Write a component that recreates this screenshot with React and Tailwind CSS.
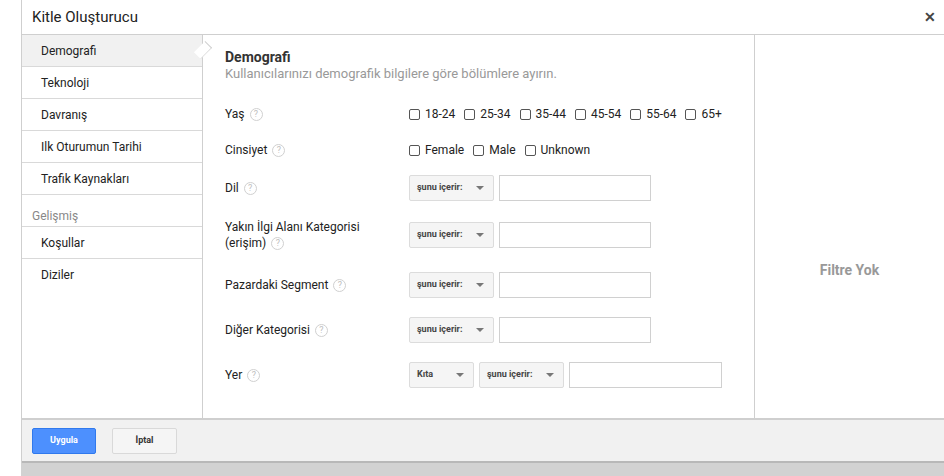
import React from 'react';

const Help = () => (
  <span className="inline-flex items-center justify-center w-[13px] h-[13px] rounded-full border border-[#d0d0d0] text-[9px] text-[#c0c0c0] ml-[5px] align-middle leading-none">?</span>
);

const Check = ({ label }) => (
  <label className="flex items-center gap-[5px] mr-[9px]">
    <span className="w-[11px] h-[11px] border border-[#555] rounded-[2px] bg-white" />
    <span>{label}</span>
  </label>
);

const Select = ({ label, w = 'w-[85px]' }) => (
  <div className={`${w} h-[26px] bg-[#f5f5f5] border border-[#dcdcdc] rounded-[2px] flex items-center justify-between px-[7px] text-[9px] font-bold text-[#444]`}>
    <span>{label}</span>
    <span className="w-0 h-0 border-l-[4px] border-r-[4px] border-t-[4px] border-l-transparent border-r-transparent border-t-[#777] mr-[2px]" />
  </div>
);

const Input = ({ w = 'w-[152px]' }) => <div className={`${w} h-[26px] border border-[#d0d0d0] bg-white`} />;

export default function App() {
  const nav = ['Demografi', 'Teknoloji', 'Davranış', 'Ilk Oturumun Tarihi', 'Trafik Kaynakları'];
  const textRows = [
    { label: 'Dil', h: 'h-[40px]' },
    { label: <>Yakın İlgi Alanı Kategorisi<br />(erişim)</>, h: 'h-[54px]' },
    { label: 'Pazardaki Segment', h: 'h-[45px]' },
    { label: 'Diğer Kategorisi', h: 'h-[45px]' },
  ];
  return (
    <div className="w-[944px] h-[476px] bg-white overflow-hidden text-[12px] text-[#222]" style={{ fontFamily: 'Roboto, "Liberation Sans", sans-serif' }}>
      <div className="ml-[21px] w-[923px] h-[463px] border-l border-[#cfcfcf] flex flex-col">
        <div className="h-[35px] border-b border-[#cfcfcf] flex items-center justify-between pl-[10px] pr-[8px] shrink-0">
          <span className="text-[15px] text-[#222]">Kitle Oluşturucu</span>
          <span className="text-[14px] font-bold text-[#444]">✕</span>
        </div>
        <div className="flex flex-1 min-h-0">
          <div className="w-[181px] border-r border-[#cfcfcf] shrink-0">
            {nav.map((n, i) => (
              <div key={n} className={`h-[32px] flex items-center pl-[19px] border-b border-[#d9d9d9] ${i === 0 ? 'bg-[#f1f1f1] relative' : ''}`}>
                {n}
                {i === 0 && (
                  <span className="absolute right-[-9px] top-[7px] w-[16px] h-[16px] bg-white border-t border-r border-[#cfcfcf] rotate-45 scale-x-[0.6]" />
                )}
              </div>
            ))}
            <div className="h-[32px] flex items-end pb-[1px] pl-[10px] text-[#888] border-b border-[#d9d9d9]">Gelişmiş</div>
            <div className="h-[32px] flex items-center pl-[19px] border-b border-[#d9d9d9]">Koşullar</div>
            <div className="h-[32px] flex items-center pl-[19px]">Diziler</div>
          </div>
          <div className="w-[552px] border-r border-[#cfcfcf] shrink-0 pl-[22px] pt-[13px]">
            <div className="text-[14px] font-bold text-[#333] leading-[18px]">Demografi</div>
            <div className="text-[13px] text-[#999] leading-[16px]">Kullanıcılarınızı demografik bilgilere göre bölümlere ayırın.</div>
            <div className="mt-[14px] flex h-[36px] items-center">
              <div className="w-[184px]">Yaş<Help /></div>
              <div className="flex">{['18-24', '25-34', '35-44', '45-54', '55-64', '65+'].map((a) => <Check key={a} label={a} />)}</div>
            </div>
            <div className="flex h-[36px] items-center">
              <div className="w-[184px]">Cinsiyet<Help /></div>
              <div className="flex">{['Female', 'Male', 'Unknown'].map((a) => <Check key={a} label={a} />)}</div>
            </div>
            {textRows.map((r, i) => (
              <div key={i} className={`flex ${r.h} items-center`}>
                <div className="w-[184px] leading-[16px]">{r.label}<Help /></div>
                <div className="flex gap-[5px]"><Select label="şunu içerir:" /><Input /></div>
              </div>
            ))}
            <div className="flex h-[46px] items-center">
              <div className="w-[184px]">Yer<Help /></div>
              <div className="flex gap-[5px]"><Select label="Kıta" w="w-[65px]" /><Select label="şunu içerir:" /><Input w="w-[153px]" /></div>
            </div>
          </div>
          <div className="flex-1 flex items-center justify-center pt-[88px]">
            <span className="text-[14px] font-bold text-[#999]">Filtre Yok</span>
          </div>
        </div>
        <div className="h-[45px] bg-[#f1f1f1] border-t-2 border-[#cfcfcf] border-b-2 border-b-[#b8b8b8] flex items-center pl-[10px] gap-[16px] shrink-0">
          <div className="w-[64px] h-[26px] bg-[#4d90fe] border border-[#3079ed] rounded-[2px] text-white text-[9px] font-bold flex items-center justify-center">Uygula</div>
          <div className="w-[65px] h-[26px] bg-[#f5f5f5] border border-[#d9d9d9] rounded-[2px] text-[#333] text-[9px] font-bold flex items-center justify-center">İptal</div>
        </div>
      </div>
      <div className="ml-[21px] h-[13px] bg-[#d2d2d2]" />
    </div>
  );
}
